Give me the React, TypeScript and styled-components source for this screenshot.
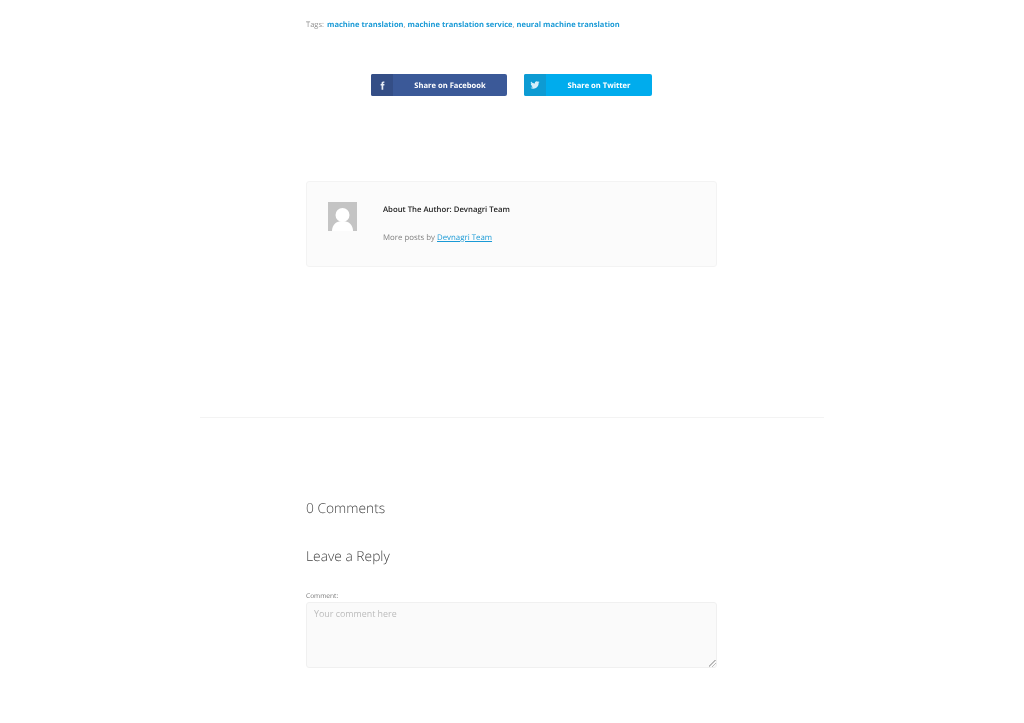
import React from "react"
import styled, { createGlobalStyle } from "styled-components"

const GlobalStyle = createGlobalStyle`
  html, body {
    margin: 0;
    padding: 0;
    height: 723px;
    overflow: hidden;
    background: #fff;
    font-family: "Open Sans", "Liberation Sans", sans-serif;
    text-rendering: geometricPrecision;
  }
`

const Page = styled.div`
  width: 1024px;
  height: 723px;
  overflow: hidden;
  padding-top: 19px;
  box-sizing: border-box;
  will-change: transform;
`

const Column = styled.div`
  width: 411px;
  margin-left: 306px;
`

const Tags = styled.div`
  font-size: 7.55px;
  line-height: 12px;
  color: #919191;
  a {
    color: #1a9ad6;
    font-weight: 700;
    text-decoration: none;
  }
  span {
    margin-right: 1px;
  }
`

const ShareRow = styled.div`
  display: flex;
  gap: 17px;
  margin-top: 43px;
  padding-left: 65px;
`

const ShareButton = styled.a<{ $bg: string; $dark: string; $w: number }>`
  display: flex;
  width: ${(p) => p.$w}px;
  height: 22px;
  border-radius: 2px;
  overflow: hidden;
  background: ${(p) => p.$bg};
  color: #fff;
  font-size: 7.6px;
  font-weight: 700;
  line-height: 24px;
  .icon {
    width: 22px;
    flex: none;
    display: flex;
    align-items: center;
    justify-content: center;
    background: ${(p) => p.$dark};
  }
  .label {
    flex: 1;
    text-align: center;
  }
`

const AuthorBox = styled.div`
  display: flex;
  height: 86px;
  box-sizing: border-box;
  margin-top: 85px;
  padding: 20px 0 0 21px;
  background: #fbfbfb;
  border: 1px solid #f3f3f3;
  border-radius: 3px;
`

const Avatar = styled.svg`
  width: 29px;
  height: 29px;
  flex: none;
  display: block;
`

const AuthorText = styled.div`
  margin: 1px 0 0 26px;
`

const AuthorName = styled.div`
  color: #222;
  font-size: 7.75px;
  font-weight: 600;
  line-height: 14px;
`

const AuthorPosts = styled.div`
  margin-top: 14px;
  font-size: 7.85px;
  line-height: 15px;
  color: #808080;
  a {
    color: #1a9ad6;
    text-decoration: underline;
  }
`

const Divider = styled.hr`
  width: 624px;
  height: 1px;
  margin: 150px auto 0;
  border: 0;
  background: #f3f3f3;
`

const CommentsTitle = styled.h3`
  margin: 81px 0 0;
  font-size: 13.8px;
  line-height: 20px;
  font-weight: 300;
  color: #444;
`

const ReplyTitle = styled.h3`
  margin: 28px 0 0;
  font-size: 13.8px;
  line-height: 20px;
  font-weight: 300;
  color: #444;
`

const FieldLabel = styled.label`
  display: block;
  margin-top: 24px;
  font-size: 6.6px;
  line-height: 10px;
  color: #777;
`

const CommentInput = styled.textarea`
  display: block;
  width: 411px;
  height: 66px;
  margin-top: 1px;
  padding: 4px 7px;
  box-sizing: border-box;
  background: #fafafa;
  border: 1px solid #f0f0f0;
  border-radius: 3px;
  font-family: inherit;
  font-size: 8.9px;
  line-height: 13px;
  outline: none;
  &::placeholder {
    color: #bbb;
    opacity: 1;
  }
  &::-webkit-resizer {
    background: linear-gradient(135deg, transparent 40%, #bbb 40%, #bbb 52%, transparent 52%, transparent 66%, #bbb 66%, #bbb 78%, transparent 78%) right bottom / 7px 7px no-repeat;
  }
`

export default function App() {
  return (
    <>
      <GlobalStyle />
      <Page>
        <Column>
          <Tags>
            <span>Tags:</span> <a>machine translation</a>, <a>machine translation service</a>, <a>neural machine translation</a>
          </Tags>
          <ShareRow>
            <ShareButton $bg="#3b5998" $dark="#344e86" $w={136}>
              <span className="icon">
                <svg width="9" height="9" viewBox="0 0 24 24" fill="#e8edf5">
                  <path d="M14 8V6c0-1 .5-1.500 1.500-1.500H17V1h-3c-3 0-4.500 2-4.500 4.500V8H7v4h2.500v11H14V12h2.700l.5-4z" />
                </svg>
              </span>
              <span className="label">Share on Facebook</span>
            </ShareButton>
            <ShareButton $bg="#00aced" $dark="#0d9bd3" $w={128}>
              <span className="icon">
                <svg width="10" height="10" viewBox="0 0 24 24" fill="#d5eefa">
                  <path d="M23 5c-.8.400-1.700.600-2.600.700.900-.600 1.600-1.400 2-2.500-.9.500-1.800.900-2.900 1.100A4.500 4.500 0 0 0 11.800 8.400C8 8.200 4.600 6.400 2.400 3.600a4.500 4.500 0 0 0 1.400 6c-.7 0-1.400-.2-2-.6 0 2.200 1.500 4.100 3.600 4.500-.7.200-1.400.2-2 .1.600 1.800 2.200 3.100 4.200 3.100A9 9 0 0 1 1 18.600 12.800 12.800 0 0 0 20.700 7.200c.9-.6 1.700-1.300 2.300-2.200z" />
                </svg>
              </span>
              <span className="label">Share on Twitter</span>
            </ShareButton>
          </ShareRow>
          <AuthorBox>
            <Avatar viewBox="0 0 29 29">
              <rect width="29" height="29" fill="#c4c4c4" />
              <circle cx="14.500" cy="13" r="7" fill="#fff" />
              <path d="M4 29c0-6 4-10 10.500-10S25 23 25 29z" fill="#fff" />
            </Avatar>
            <AuthorText>
              <AuthorName>About The Author: Devnagri Team</AuthorName>
              <AuthorPosts>
                More posts by <a>Devnagri Team</a>
              </AuthorPosts>
            </AuthorText>
          </AuthorBox>
        </Column>
        <Divider />
        <Column>
          <CommentsTitle>0 Comments</CommentsTitle>
          <ReplyTitle>Leave a Reply</ReplyTitle>
          <FieldLabel>Comment:</FieldLabel>
          <CommentInput placeholder="Your comment here" />
        </Column>
      </Page>
    </>
  )
}
